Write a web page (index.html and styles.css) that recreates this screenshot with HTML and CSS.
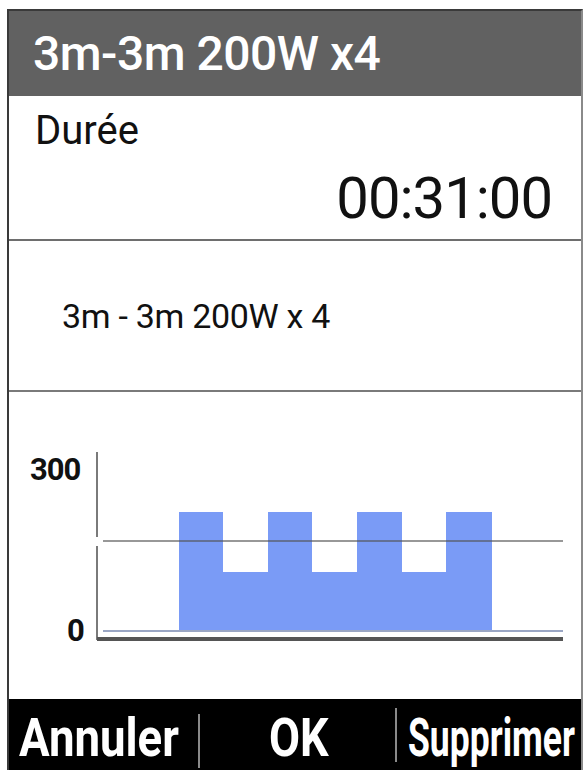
FILE: index.html
```html
<!DOCTYPE html>
<html lang="fr">
<head>
<meta charset="utf-8">
<title>Séance</title>
<link rel="stylesheet" href="styles.css">
</head>
<body>
<div class="device">
  <div class="header">3m-3m 200W x4</div>
  <div class="duration">
    <div class="label">Durée</div>
    <div class="time">00:31:00</div>
  </div>
  <div class="summary">3m - 3m 200W x 4</div>
  <div class="chart">
    <svg class="chart-svg" width="572" height="307" viewBox="9 393 572 307">
      <text class="axis-label" x="30" y="481">300</text>
      <text class="axis-label" x="67" y="642">0</text>
      <polygon class="bars" points="179,632 179,513 223,513 223,573 268,573 268,513 312,513 312,573 357,573 357,513 402,513 402,573 446,573 446,513 492,513 492,632"/>
      <line class="ref" x1="103" y1="542" x2="563" y2="542"/>
      <line class="base" x1="103" y1="632" x2="563" y2="632"/>
      <line class="yaxis" x1="97" y1="453" x2="97" y2="538"/>
      <line class="yaxis" x1="97" y1="547" x2="97" y2="641"/>
      <line class="xaxis" x1="97" y1="640" x2="563" y2="640"/>
    </svg>
  </div>
  <div class="footer">
    <div class="btn btn-left"><span class="lbl-annuler">Annuler</span></div>
    <div class="sep sep-1"></div>
    <div class="btn btn-mid"><span class="lbl-ok">OK</span></div>
    <div class="sep sep-2"></div>
    <div class="btn btn-right"><span class="lbl-suppr">Supprimer</span></div>
  </div>
</div>
</body>
</html>
```

FILE: styles.css
```css
* { box-sizing: border-box; }
html, body { margin: 0; padding: 0; background: #ffffff; }
body { font-family: Roboto, "Liberation Sans", sans-serif; color: #111; }

.device {
  margin: 9px 0 0 7px;
  width: 576px;
  border-left: 2px solid #3a3a3a;
  border-right: 2px solid #8a8a8a;
  border-top: 2px solid #3a3a3a;
}

.header {
  height: 85px;
  background: #616161;
  color: #ffffff;
  font-weight: 500;
  font-size: 48px;
  padding-left: 24px;
  display: flex;
  align-items: center;
  letter-spacing: -0.5px;
}

.duration {
  height: 145px;
  border-bottom: 2px solid #6e6e6e;
  padding: 12px 29px 0 26px;
  display: flex;
  flex-direction: column;
}
.label {
  font-size: 40px;
  line-height: 46px;
}
.time {
  align-self: flex-end;
  font-size: 58px;
  line-height: 60px;
  margin-top: 14px;
  letter-spacing: -1px;
  font-weight: 400;
}

.summary {
  height: 151px;
  border-bottom: 2px solid #7a7a7a;
  padding-left: 53px;
  display: flex;
  align-items: center;
  font-size: 34px;
  letter-spacing: -0.3px;
}

.chart { height: 307px; }
.chart-svg { display: block; }
.axis-label { font-family: Roboto, "Liberation Sans", sans-serif; font-weight: 700; font-size: 31px; fill: #111; letter-spacing: -1px; }
.bars { fill: #7a9bf6; }
.ref { stroke: #555; stroke-width: 1.5; opacity: 0.8; }
.base { stroke: #9aa6c4; stroke-width: 2; }
.yaxis { stroke: #7a7a7a; stroke-width: 2; }
.xaxis { stroke: #555; stroke-width: 4; }

.footer {
  height: 71px;
  background: #000000;
  color: #ffffff;
  display: flex;
  align-items: center;
  font-weight: 700;
  font-size: 53px;
  line-height: 60px;
  overflow: hidden;
}
.btn { display: flex; align-items: center; }
.btn span { display: inline-block; transform-origin: left center; padding-top: 6px; }
.btn-left { width: 189px; padding-left: 10px; }
.lbl-annuler { transform: scaleX(0.86); }
.btn-mid { flex: 1; padding-left: 69px; }
.lbl-ok { transform: scaleX(0.85); }
.btn-right { width: 184px; padding-left: 11px; }
.lbl-suppr { transform: scaleX(0.67); }
.sep { width: 2px; background: #8a8a8a; }
.sep-1 { height: 54px; margin-top: 12px; }
.sep-2 { height: 54px; margin-top: 0; }
```
